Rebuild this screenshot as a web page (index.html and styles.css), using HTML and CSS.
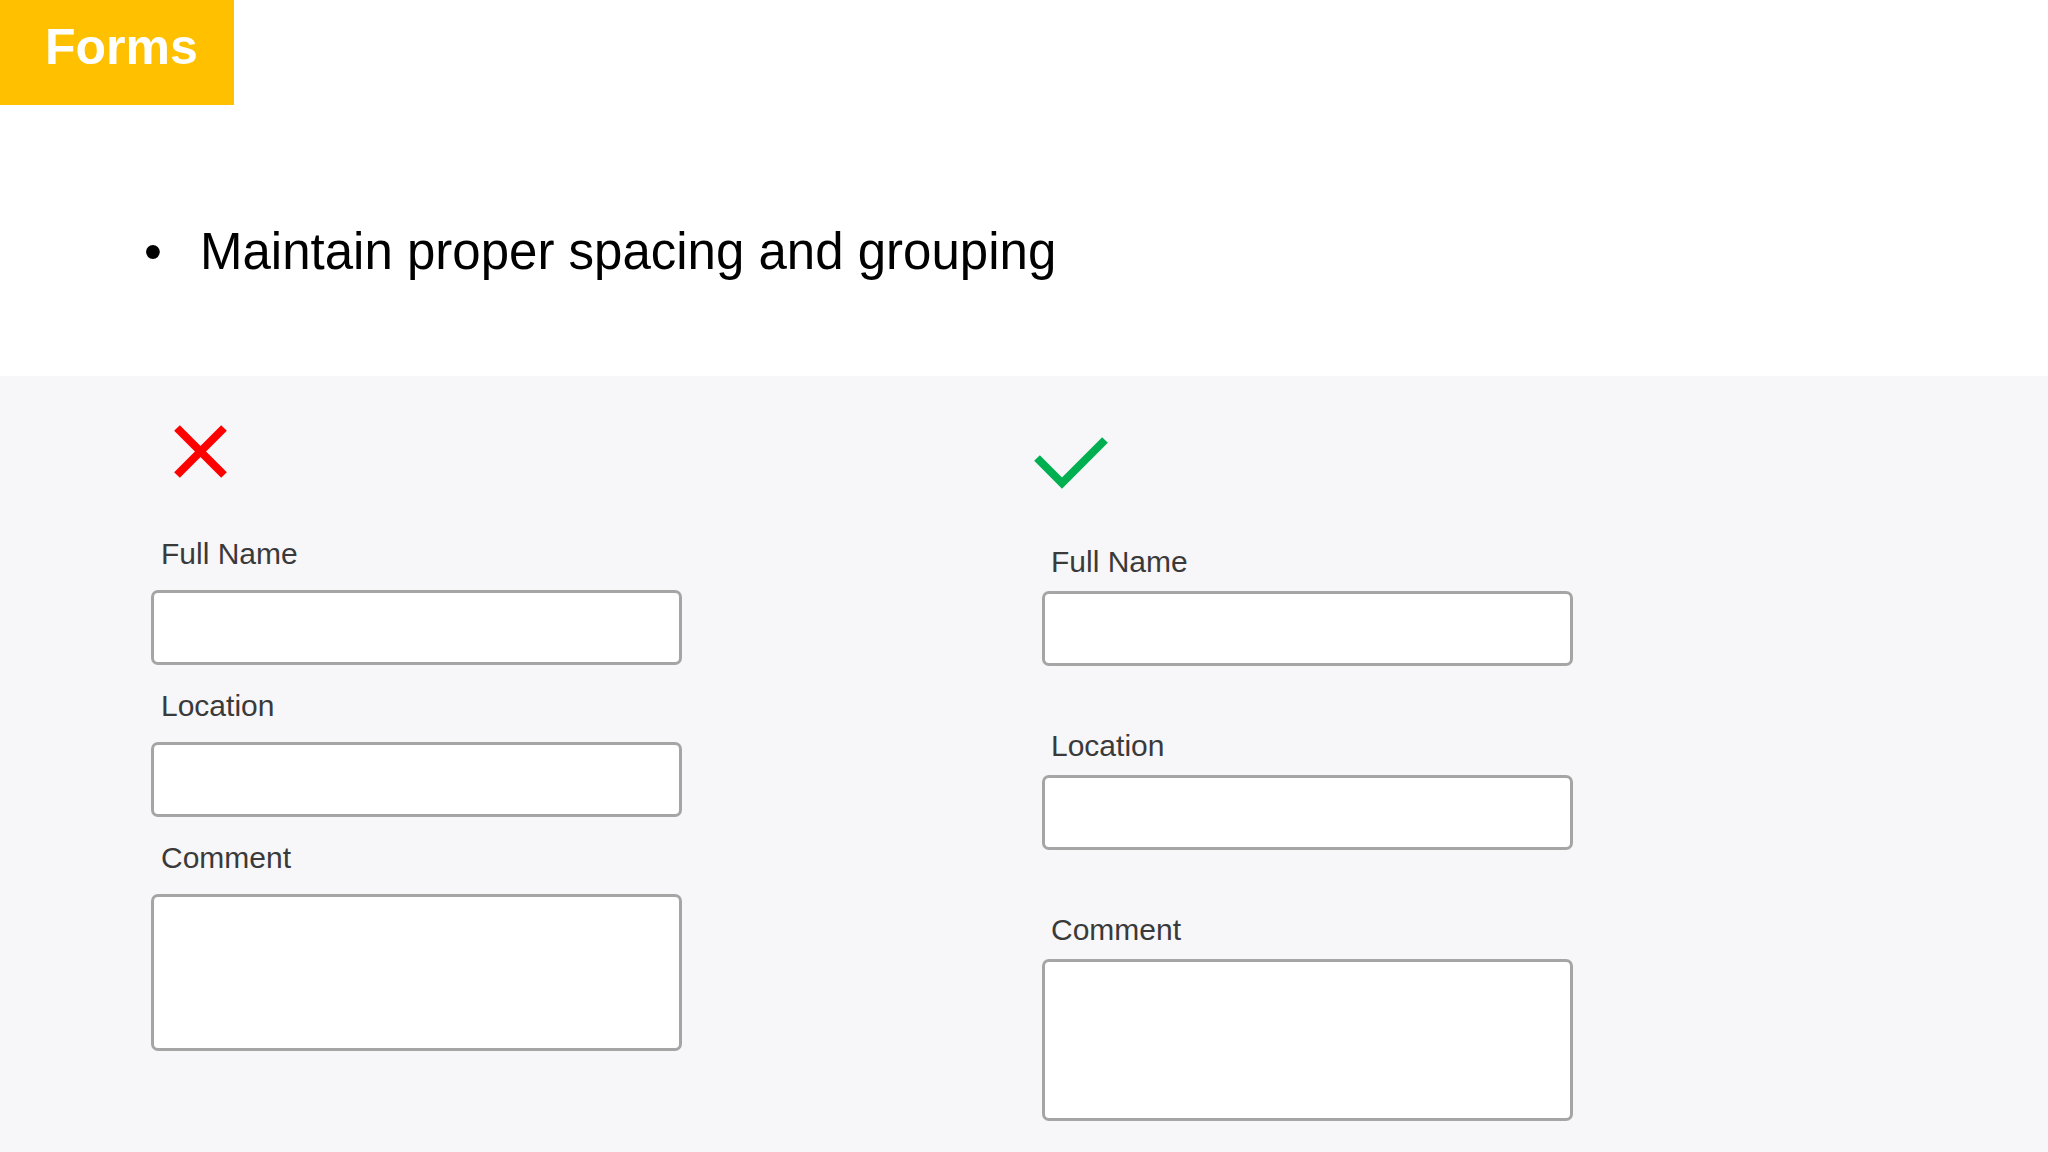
FILE: index.html
```html
<!DOCTYPE html>
<html lang="en">
<head>
<meta charset="utf-8">
<title>Forms</title>
<link rel="stylesheet" href="styles.css">
</head>
<body>
<header class="header">
  <div class="tag">Forms</div>
  <ul class="points">
    <li class="point"><span class="dot">•</span><span>Maintain proper spacing and grouping</span></li>
  </ul>
</header>
<main class="panel">
  <section class="col bad">
    <svg class="icon icon-x" width="60" height="60" viewBox="0 0 60 60" aria-hidden="true">
      <path d="M6 6 L53 53 M53 6 L6 53" stroke="#ff0000" stroke-width="8" fill="none"/>
    </svg>
    <div class="field"><label class="label">Full Name</label><div class="input"></div></div>
    <div class="field"><label class="label">Location</label><div class="input"></div></div>
    <div class="field"><label class="label">Comment</label><div class="input area"></div></div>
  </section>
  <section class="col good">
    <svg class="icon icon-check" width="80" height="60" viewBox="0 0 80 60" aria-hidden="true">
      <polyline points="7,26 32,51 75,8" stroke="#00b050" stroke-width="8" fill="none" stroke-linejoin="miter"/>
    </svg>
    <div class="field"><label class="label">Full Name</label><div class="input"></div></div>
    <div class="field"><label class="label">Location</label><div class="input"></div></div>
    <div class="field"><label class="label">Comment</label><div class="input area"></div></div>
  </section>
</main>
</body>
</html>
```

FILE: styles.css
```css
* { box-sizing: border-box; }
html, body { margin: 0; padding: 0; }
body {
  width: 2048px;
  height: 1152px;
  overflow: hidden;
  font-family: "Liberation Sans", Arial, sans-serif;
  background: #ffffff;
}
.header {
  height: 376px;
  background: #ffffff;
  display: flex;
  flex-direction: column;
}
.tag {
  width: 234px;
  height: 105px;
  background: #ffc000;
  color: #ffffff;
  font-weight: bold;
  font-size: 50px;
  line-height: 56px;
  padding: 19px 0 0 45px;
}
.points {
  list-style: none;
  margin: 117px 0 0 0;
  padding: 0 0 0 144px;
}
.point {
  display: flex;
  font-size: 51px;
  line-height: 60px;
  color: #000000;
}
.dot {
  width: 56px;
  flex: none;
}
.panel {
  height: 776px;
  background: #f7f6f9;
  display: flex;
  padding-top: 46px;
}
.col {
  width: 531px;
  display: flex;
  flex-direction: column;
}
.bad { margin-left: 151px; }
.good { margin-left: 360px; }
.icon { display: block; flex: none; }
.icon-x { margin-left: 20px; margin-bottom: 55px; }
.icon-check { margin-left: -12px; margin-top: 10px; margin-bottom: 53px; }
.field { display: flex; flex-direction: column; }
.label {
  font-size: 30px;
  line-height: 34px;
  color: #3a3a3a;
  padding-left: 10px;
}
.input {
  height: 75px;
  background: #ffffff;
  border: 3px solid #a5a5a5;
  border-radius: 7px;
}
.input.area { height: 157px; }
.bad .label { margin-bottom: 19px; }
.bad .field + .field { margin-top: 24px; }
.good .label { margin-bottom: 12px; padding-left: 9px; }
.good .field + .field { margin-top: 63px; }
.good .input.area { height: 162px; }
```
